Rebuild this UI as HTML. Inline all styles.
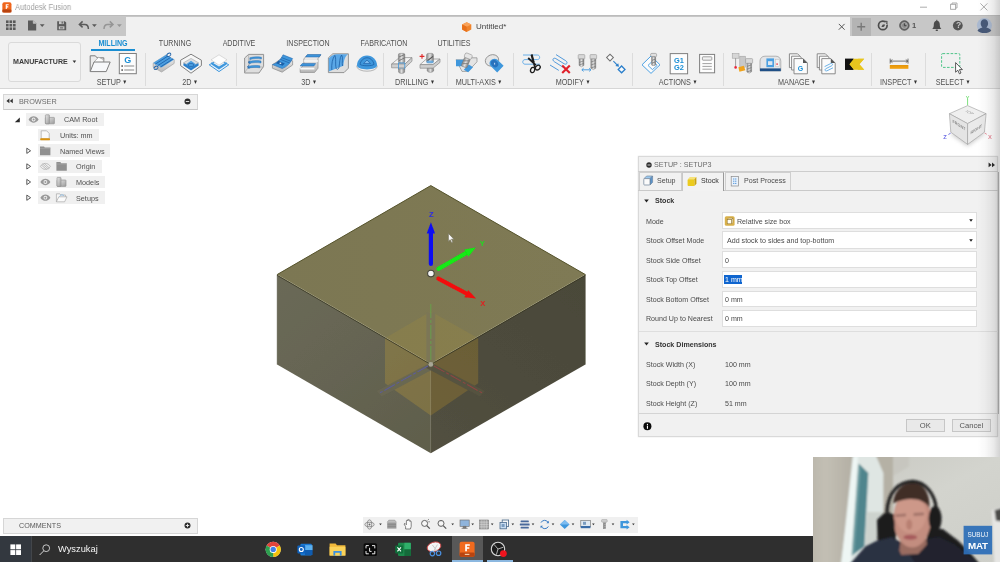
<!DOCTYPE html>
<html lang="en">
<head>
<meta charset="utf-8">
<title>Autodesk Fusion</title>
<style>
*{box-sizing:border-box;margin:0;padding:0}
html,body{width:1000px;height:562px;overflow:hidden;background:#fff}
body{position:relative;font-family:"Liberation Sans",sans-serif;font-size:8px;color:#444;-webkit-font-smoothing:antialiased}
.abs{position:absolute}
.t{position:absolute;white-space:nowrap;line-height:1}
#soft{position:absolute;left:0;top:0;width:1000px;height:562px;filter:blur(.45px)}
/* title */
#title{left:0;top:0;width:1000px;height:15px;background:#fff}
/* quick bar */
#qbar{left:0;top:15px;width:1000px;height:21px;background:#c7c7c7;border-top:1.600px solid #bcbcbc}
#tabarea{left:126px;top:17px;width:724px;height:19px;background:#f1f1f1}
/* ribbon */
#ribbon{left:0;top:36px;width:1000px;height:53.4px;background:#f1f1f1;border-bottom:1px solid #d6d6d6}
.rt{position:absolute;top:39.5px;font-size:7.6px;color:#505050;white-space:nowrap;line-height:8px;transform:translateX(-50%) scaleY(1.24);transform-origin:50% 88%}
.rl{position:absolute;margin-left:.8px;top:78.5px;font-size:7.25px;color:#505050;white-space:nowrap;line-height:8px;transform:translateX(-50%) scaleY(1.2);transform-origin:50% 88%}
.rl i{font-style:normal;font-size:5px;position:relative;top:-1px;margin-left:1.5px;color:#333}
.sep{position:absolute;top:53px;width:1px;height:33px;background:#dcdcdc}
.t,.rt,.rl,.tx,.pl,.pv,.ph,.pbtn,svg{will-change:transform}
.pl,.pv,.ph{transform:scaleY(1.12);transform-origin:0 86%}
.tx{transform:scaleY(1.06);transform-origin:0 86%}
</style>
</head>
<body>
<div id="soft">
<!--TITLE-->
<div id="title" class="abs">
  <svg class="abs" style="left:1.700px;top:1.600px" width="10" height="11" viewBox="0 0 11 11" preserveAspectRatio="none"><rect x="0.4" y="0.2" width="10" height="10.4" rx="2" fill="#f0661c"/><rect x="0.4" y="7.6" width="10" height="3" rx="1.2" fill="#b8430f"/><path d="M4.1 2.2h3.2v1.1H5.3v1h1.6v1.1H5.3v1.7H4.1z" fill="#fff"/></svg>
  <span class="t" style="left:14.6px;top:2.6px;font-size:9px;color:#a0a0a0;transform:scaleX(.838);transform-origin:0 50%">Autodesk Fusion</span>
  <svg class="abs" style="left:915px;top:0" width="80" height="15" viewBox="0 0 80 15" fill="none" stroke="#a4a4a4" stroke-width="0.9"><path d="M5 7.2h7"/><rect x="35.6" y="4.3" width="5" height="5"/><path d="M37 4.3V3h5v5h-1.3"/><path d="M65.4 3.4l7 7M72.4 3.4l-7 7"/></svg>
</div>
<div id="qbar" class="abs"></div>
<div id="tabarea" class="abs"></div>
<div class="abs" style="left:852px;top:18px;width:19px;height:18px;background:#b4b4b4"></div>
<svg class="abs" style="left:0;top:15px" width="1000" height="21" viewBox="0 15 1000 21">
  <!-- grid -->
  <g fill="#5a5a5a">
    <rect x="6" y="20.4" width="2.6" height="2.6"/><rect x="9.5" y="20.4" width="2.6" height="2.6"/><rect x="13" y="20.4" width="2.6" height="2.6"/>
    <rect x="6" y="23.9" width="2.6" height="2.6"/><rect x="9.5" y="23.9" width="2.6" height="2.6"/><rect x="13" y="23.9" width="2.6" height="2.6"/>
    <rect x="6" y="27.4" width="2.6" height="2.6"/><rect x="9.5" y="27.4" width="2.6" height="2.6"/><rect x="13" y="27.4" width="2.6" height="2.6"/>
    <!-- file -->
    <path d="M28 20.4h5.2l3 3v7H28z"/>
    <path d="M39.8 24.2h4.8l-2.4 2.9z"/>
    <!-- save -->
    <path d="M57.2 21.2h7.6l1.4 1.4v7.6h-9z"/>
    <!-- undo -->
    <path d="M92 24.2h4.8l-2.4 2.9z"/>
  </g>
  <rect x="59" y="21.2" width="4.8" height="2.9" fill="#c6c6c6"/><rect x="61.6" y="21.6" width="1.2" height="2" fill="#5a5a5a"/>
  <rect x="58.8" y="26.3" width="5.6" height="3" fill="#c6c6c6"/><rect x="60" y="27.4" width="3.2" height="1" fill="#5a5a5a"/>
  <path d="M33.2 20.4v3h3" fill="#c6c6c6" stroke="#c6c6c6" stroke-width=".5"/>
  <path d="M82.6 21.4l-3.2 3 3.2 3M79.6 24.4h5.2c2.4 0 3.6 1.6 3.6 4.6" fill="none" stroke="#5a5a5a" stroke-width="1.5"/>
  <g opacity=".45"><path d="M109.8 21.4l3.2 3-3.2 3M112.8 24.4h-5.2c-2.4 0-3.6 1.6-3.6 4.6" fill="none" stroke="#5a5a5a" stroke-width="1.5"/><path d="M117 24.2h4.8l-2.4 2.9z" fill="#5a5a5a"/></g>
  <!-- doc tab -->
  <g><path d="M466.7 22.2l4.6 2.2v5.2l-4.6 2.4-4.6-2.4v-5.2z" fill="#f0842c"/><path d="M466.7 22.2l4.6 2.2-4.6 2.3-4.6-2.3z" fill="#f9a35a"/><path d="M466.7 26.7v5.3l-4.6-2.4v-5.2z" fill="#e8701a"/></g>
  <path d="M838.800 23.900l5.800 5.800M844.600 23.900l-5.800 5.800" stroke="#555" stroke-width="1" fill="none"/>
  <path d="M857.2 26.800h8M861.2 22.800v8" stroke="#787878" stroke-width="1.400" fill="none"/>
  <!-- extensions -->
  <circle cx="882.800" cy="25.400" r="4.300" fill="none" stroke="#4c4c4c" stroke-width="1.700"/><path d="M882.800 25.400l3.400-3.800 1.600 3z" fill="#c6c6c6"/><path d="M881.400 26.800c1.800.6 3.400-.4 3.600-2.400l-2.200.2z" fill="#4c4c4c"/><path d="M884.600 21.200l2.600.2-.6 2.600" fill="none" stroke="#4c4c4c" stroke-width="1"/>
  <circle cx="904.400" cy="25.500" r="4.700" fill="#6a6a6a" stroke="#4c4c4c" stroke-width=".9"/><circle cx="904.400" cy="25.500" r="3" fill="#8c8c8c" stroke="#c6c6c6" stroke-width=".6"/><path d="M904.400 23.400v2.300h2" stroke="#3a3a3a" stroke-width=".9" fill="none"/>
  <!-- bell -->
  <path d="M932.200 29c1.400-1 1.600-2.600 1.600-4.400 0-2.200 1.200-3.800 3-3.800s3 1.600 3 3.800c0 1.800.2 3.400 1.600 4.400z" fill="#4c4c4c"/><rect x="935.600" y="29.400" width="2.400" height="1.500" rx=".7" fill="#4c4c4c"/><rect x="936.300" y="19.800" width="1" height="1.400" fill="#4c4c4c"/>
  <!-- help -->
  <circle cx="957.8" cy="25.600" r="4.900" fill="#555"/>
  <!-- avatar -->
  <circle cx="984.400" cy="25.500" r="7.500" fill="#aab9d0"/>
  <path d="M984.400 19.200c2.300 0 3.700 1.800 3.700 4.200 0 1.700-.7 3.200-1.800 4 2.400.4 4.200 1.500 5 3.400-1.600 1.500-4 2.300-6.900 2.300s-5.300-.8-6.900-2.300c.8-1.900 2.600-3 5-3.400-1.100-.8-1.800-2.300-1.800-4 0-2.400 1.400-4.200 3.700-4.200z" fill="#475978"/>
</svg>
<span class="t" style="left:475.600px;top:23.100px;font-size:8px;color:#444">Untitled*</span>
<span class="t" style="left:911.600px;top:22px;font-size:7.600px;color:#555;font-weight:bold">1</span>
<span class="t" style="left:955.500px;top:21.400px;font-size:8.500px;color:#c6c6c6;font-weight:bold">?</span>

<!--QBAR-->
<!--RIBBON-->
<div id="ribbon" class="abs"></div>
<div class="abs" style="left:8px;top:42.400px;width:73px;height:39.600px;border:1px solid #dadada;border-radius:3px;background:#f3f3f3"></div>
<span class="t" style="left:13.3px;top:59.4px;font-size:7.1px;font-weight:bold;color:#3c3c3c">MANUFACTURE</span>
<svg class="abs" style="left:72.4px;top:60.3px" width="5" height="4" viewBox="0 0 5 4"><path d="M.6.6h3.6L2.4 3z" fill="#333"/></svg>
<span class="rt" style="left:112.6px;color:#1a8ed2;font-weight:bold;font-size:7.1px">MILLING</span>
<div class="abs" style="left:90.500px;top:48.900px;width:44.500px;height:1.900px;background:#1a8ed2"></div>
<span class="rt" style="left:175px;font-size:7.1px">TURNING</span>
<span class="rt" style="left:238.5px;font-size:7.1px">ADDITIVE</span>
<span class="rt" style="left:308px;font-size:7.1px">INSPECTION</span>
<span class="rt" style="left:383.5px;font-size:7.1px">FABRICATION</span>
<span class="rt" style="left:453.5px;font-size:7.1px">UTILITIES</span>
<span class="rl" style="left:111.400px">SETUP<i>&#9660;</i></span>
<span class="rl" style="left:189px">2D<i>&#9660;</i></span>
<span class="rl" style="left:308.4px">3D<i>&#9660;</i></span>
<span class="rl" style="left:413.8px">DRILLING<i>&#9660;</i></span>
<span class="rl" style="left:478px">MULTI-AXIS<i>&#9660;</i></span>
<span class="rl" style="left:572.3px">MODIFY<i>&#9660;</i></span>
<span class="rl" style="left:677.4px">ACTIONS<i>&#9660;</i></span>
<span class="rl" style="left:795.8px">MANAGE<i>&#9660;</i></span>
<span class="rl" style="left:898.3px">INSPECT<i>&#9660;</i></span>
<span class="rl" style="left:951.8px">SELECT<i>&#9660;</i></span>
<div class="sep" style="left:144.5px"></div><div class="sep" style="left:235.6px"></div><div class="sep" style="left:383px"></div>
<div class="sep" style="left:446.5px"></div><div class="sep" style="left:513px"></div><div class="sep" style="left:632px"></div>
<div class="sep" style="left:723.2px"></div><div class="sep" style="left:871px"></div><div class="sep" style="left:925.4px"></div>
<svg id="ricons" class="abs" style="left:0;top:50px" width="1000" height="28" viewBox="0 50 1000 28">
<defs>
<linearGradient id="gsl" x1="0" y1="0" x2="0" y2="1"><stop offset="0" stop-color="#f4f4f4"/><stop offset="1" stop-color="#b8b8b8"/></linearGradient>
<linearGradient id="gmt" x1="0" y1="0" x2="1" y2="0"><stop offset="0" stop-color="#8a8a8a"/><stop offset=".5" stop-color="#e2e2e2"/><stop offset="1" stop-color="#7c7c7c"/></linearGradient>
</defs>
<!-- 1 folder -->
<g fill="none" stroke="#7d7d7d" stroke-width="1">
<path d="M90.200 71.400V55.800h5.200l1.600 2h6.800v4" fill="#ececec"/>
<path d="M93.600 62.400l5-5.200 4.800 2.400v3.600" fill="#fdfdfd" stroke="#a4a4a4" stroke-width=".8"/>
<path d="M90.200 71.600l3.800-9.600h16.200l-4 9.600z" fill="#f7f8fa"/>
</g>
<!-- 2 G doc -->
<rect x="119.300" y="53.500" width="17" height="20.200" fill="#fdfdfd" stroke="#7f7f7f" stroke-width="1"/>
<text x="127.800" y="63.400" font-family="Liberation Sans, sans-serif" font-weight="bold" font-size="9" fill="#1b8fd6" text-anchor="middle">G</text>
<path d="M124.200 66h10M124.200 70h10" stroke="#8a8a8a" stroke-width="1.100"/><rect x="121.400" y="65.300" width="1.500" height="1.500" fill="#444"/><rect x="121.400" y="69.300" width="1.500" height="1.500" fill="#444"/>
<!-- 3 2D adaptive -->
<path d="M153.200 63.200l12.600-8 8.400 4.400v3.800l-12.600 8.600-8.400-4.800z" fill="url(#gsl)" stroke="#9a9a9a" stroke-width=".6"/>
<path d="M153.200 63l12.600-8 8.400 4.600-12.600 8z" fill="#4a9ee0"/>
<path d="M155.200 64.200l12.800-8.200M157.800 65.600l12.800-8.200M160.400 67l12.600-8" stroke="#1f62aa" stroke-width=".9" fill="none"/>
<ellipse cx="168.800" cy="54.800" rx="2.200" ry="1.500" fill="none" stroke="#1f62aa" stroke-width=".9" transform="rotate(-30 168.800 54.800)"/><ellipse cx="156" cy="67.800" rx="2.200" ry="1.500" fill="none" stroke="#1f62aa" stroke-width=".9" transform="rotate(-30 156 67.800)"/>
<!-- 4 2D pocket -->
<path d="M191 54.200l10.400 6v5.400l-10.400 7.600-10.400-7.600v-5.400z" fill="#f7f7f7" stroke="#7f7f7f" stroke-width="1"/>
<path d="M191 59.200l7.600 4.200v2l-7.600 5.200-7.600-5.200v-2z" fill="#2b7fcb"/>
<path d="M191 58.400l7.600 4.400-7.600 4-7.600-4z" fill="#d9dde2" stroke="#9a9a9a" stroke-width=".5"/>
<path d="M191 60.800l5.200 3.600-5.200 3.400-5.200-3.400z" fill="#4da0e2"/><ellipse cx="191" cy="65" rx="3" ry="1.500" fill="none" stroke="#1c5fa6" stroke-width=".7"/>
<!-- 5 2D contour -->
<path d="M219 59.400l9.800 5.400-9.800 6.800-9.800-6.800z" fill="#e8f1fa" stroke="#3f97dc" stroke-width="1"/>
<path d="M211.400 62v2.400l7.600 5 7.600-5v-2.400l-7.600 4.600z" fill="#3f97dc"/>
<path d="M219 54.800l8 5-8 5.400-8-5.400z" fill="#fdfdfd" stroke="#c4c4c4" stroke-width=".6"/>
<!-- 6 3D adaptive -->
<path d="M244.600 58l4-3.600h15v12l-4.600 6.600h-14.400z" fill="#dedede" stroke="#8a8a8a" stroke-width=".9"/>
<path d="M248.600 54.400v12.600l-4 5.600M248.600 67h15" fill="none" stroke="#a2a2a2" stroke-width=".6"/>
<path d="M249.800 57.800c3.600-1.200 7.800-1.200 11.600-.6v1.800c-3.800-.6-8-.6-11.600.6zM249 61.600c3.800-1.200 8-1.200 12-.600v2c-4-.6-8.200-.6-12 .6zM248 66.400c3.800-1.200 8-1.200 11.800-.6v2c-3.800-.6-8-.6-11.800.6z" fill="#3f97dc" stroke="#1c5fa6" stroke-width=".4"/>
<path d="M250.400 60.400l-2.400 1.800 2.600 1.200M249.600 64.800l-2.400 2 2.600 1.200" fill="none" stroke="#1c5fa6" stroke-width=".6"/>
<!-- 7 3D pocket -->
<path d="M272.400 64.800l10.800-7.400 9.400 3.400v4.200l-10.400 7.200-9.800-4z" fill="url(#gsl)" stroke="#8a8a8a" stroke-width=".7"/>
<path d="M272.400 64.600c5-1.400 8.600-5.200 10.600-9.800l9.600 3.800c-2.200 4.600-5.600 8.200-10.400 10z" fill="#3f97dc" stroke="#1c5fa6" stroke-width=".5"/>
<path d="M276 63.200l6.600 2.600 2.200-2.400-6.400-2.600z" fill="#1c5fa6"/><path d="M281.600 57.600l9.200 3.600M280.400 59.400l9.200 3.600" stroke="#1c5fa6" stroke-width=".7"/>
<rect x="279.600" y="62.600" width="1.600" height="1.300" fill="#e9f2fb"/>
<!-- 8 steps -->
<path d="M307.200 55h13.600l-2.800 3.600v9.600l-3.400 4.200h-14.400v-3.800l3.600-3.600v-6z" fill="url(#gsl)" stroke="#8a8a8a" stroke-width=".7"/>
<path d="M307.400 54.600h13.600l-1.800 2.400h-13.600zM302.200 63.600h13.400l-1.800 2.400h-13.600z" fill="#3f97dc" stroke="#1c5fa6" stroke-width=".5"/>
<path d="M303.800 61h14.200M300.200 68.600h14.200" stroke="#f8f8f8" stroke-width="1.600"/>
<!-- 9 parallel -->
<path d="M328.400 57.800l4.400-4h15.600v14.400l-4.400 4.400h-15.600z" fill="#dedede" stroke="#8a8a8a" stroke-width=".9"/>
<path d="M328.800 58.400c2.600-3 5.200-4.200 8-4.200h11.400c-3.200 1.800-4.400 6-4.800 11.600l-14.600 5.600z" fill="#5aa7e6"/>
<path d="M331.800 70c-.4-6 .6-11.400 3-14.600 1.600 2.200.2 8.800 1.400 13 1 1.800 2.400.6 2.800-1 .8-4.600.6-10 2.600-12.400 1.800 2 0 8.200 1 11" fill="none" stroke="#1c5fa6" stroke-width=".8"/>
<!-- 10 dome -->
<ellipse cx="367" cy="66.400" rx="10.200" ry="4.800" fill="#f2f2f2" stroke="#9a9a9a" stroke-width=".7"/>
<path d="M357 65.600c0-5.600 4.400-10 10-10s10 4.400 10 10c0 2.200-4.400 3.800-10 3.800s-10-1.600-10-3.800z" fill="#3f97dc"/>
<path d="M360 64.400c.6-3.600 3.600-6.600 7-6.600s6.400 3 7 6.600c-2 1.800-12 1.800-14 0z" fill="none" stroke="#1c5fa6" stroke-width=".8"/>
<path d="M363.600 63.600l3.400-3.600 3.400 3.600z" fill="#7dbcf0" stroke="#1c5fa6" stroke-width=".7"/>
<!-- 11 drill -->
<path d="M391.600 64l7.800-6.400h12.600l-7 6.400z" fill="#f4f4f4" stroke="#8a8a8a" stroke-width=".7"/>
<path d="M391.600 64h13.400l7-6.400v3.600l-7 6.600h-13.400z" fill="#cfcfcf" stroke="#8a8a8a" stroke-width=".7"/>
<rect x="398.400" y="53.400" width="6.400" height="9.600" rx="1.400" fill="url(#gmt)" stroke="#777" stroke-width=".5"/>
<path d="M399 57l5.400-2.400M399 60.600l5.400-2.600" stroke="#6a6a6a" stroke-width=".8"/>
<rect x="398.400" y="63" width="6.400" height="6" fill="none" stroke="#3f97dc" stroke-width=".8"/>
<path d="M398.600 68.800h6v3.400c-1.200 1.600-4.800 1.600-6 0z" fill="url(#gmt)" stroke="#777" stroke-width=".5"/>
<!-- 12 bore -->
<path d="M420 64.600l6.400-5.600h13.600l-7 5.600z" fill="#f4f4f4" stroke="#8a8a8a" stroke-width=".7"/>
<path d="M420 64.600h13l7-5.600v3.400l-7 5.800h-13z" fill="#cfcfcf" stroke="#8a8a8a" stroke-width=".7"/>
<rect x="426.600" y="53.400" width="6.800" height="9.400" rx="1.600" fill="url(#gmt)" stroke="#777" stroke-width=".5"/>
<path d="M427.400 60.800l5.600-4.400" stroke="#555" stroke-width="1.200"/><path d="M426.600 60.600h6.800v2.600h-6.800z" fill="#5aa7e6" opacity=".8"/>
<path d="M427.200 68.400h6.400v2.600c-1.400 1.800-5 1.800-6.400 0z" fill="url(#gmt)" stroke="#777" stroke-width=".5"/>
<path d="M419.600 56.400h4.800M422 54v4.800" stroke="#e02828" stroke-width="1.100"/>
<!-- 13 multi-axis -->
<path d="M456 59.800h9l5-2h7v4l-9 9.600h-6z" fill="#e4e4e4" stroke="#8a8a8a" stroke-width=".7"/>
<path d="M456 59.800h8.600v6.400h-8.600zM468.800 64.400l4.200 2.800-4.800 5-4.400-2.400z" fill="#3f97dc"/>
<g transform="rotate(22 467 61)"><rect x="463.400" y="58" width="6" height="9.600" rx="1" fill="url(#gmt)" stroke="#777" stroke-width=".5"/><rect x="462.600" y="53.600" width="7.600" height="4.800" rx="1.600" fill="#e6e6e6" stroke="#888" stroke-width=".5"/><path d="M464 62l5-2M464 65l5-2" stroke="#777" stroke-width=".7"/></g>
<!-- 14 swarf -->
<ellipse cx="492" cy="60.400" rx="6.800" ry="5.600" fill="#e6e6e6" stroke="#8a8a8a" stroke-width=".8" transform="rotate(-20 492 60.400)"/>
<path d="M490.400 60.800c1.600-2.200 4.600-2.800 6.800-1.400l6.400 6.400-6.400 6.600-6.600-6.400c-1.400-1.400-1.400-3.600-.2-5.200z" fill="#3f97dc"/>
<ellipse cx="494.600" cy="63.600" rx="3.200" ry="4" fill="#2872bd" transform="rotate(-40 494.600 63.600)"/><rect x="494.200" y="62.800" width=".9" height="1.800" fill="#d6e8fa"/>
<!-- 15 scissors -->
<path d="M523 55h14.400c3 0 3 4.600 0 4.600h-12.400c-3 0-3 4.600 0 4.600h15" fill="none" stroke="#5aa7e6" stroke-width=".9"/>
<path d="M531.400 54.800l3.600 12.400M528.200 58l7.600 7.200" stroke="#1e1e1e" stroke-width="1.800"/><path d="M531 54.800l1.600-.6 2 8-1.600.4z" fill="#1e1e1e"/>
<ellipse cx="532.600" cy="70" rx="2" ry="2.700" fill="none" stroke="#1e1e1e" stroke-width="1.300" transform="rotate(20 532.600 70)"/><ellipse cx="537.800" cy="67.600" rx="2" ry="2.700" fill="none" stroke="#1e1e1e" stroke-width="1.300" transform="rotate(50 537.800 67.600)"/>
<!-- 16 delete toolpath -->
<path d="M556 54.600l9.800 6.200c2.400 1.600 1 4.400-1.600 3l-8.400-5.200c-2.600-1.400-4 1.400-1.600 3l8.800 5.600M550 65l8.800 5.400" fill="none" stroke="#3f8fd8" stroke-width=".9"/>
<path d="M562.200 65.400l7.600 7.600M569.800 65.400l-7.600 7.600" stroke="#e0202a" stroke-width="2.100"/>
<!-- 17 tool compare -->
<g><rect x="578.200" y="54.600" width="6.600" height="4.400" rx=".8" fill="#d8d8d8" stroke="#888" stroke-width=".5"/><path d="M579 59h5v6.400l-2.500 1.400-2.500-1.400z" fill="url(#gmt)" stroke="#777" stroke-width=".4"/>
<rect x="590" y="54.600" width="6.600" height="4.400" rx=".8" fill="#d8d8d8" stroke="#888" stroke-width=".5"/><path d="M590.800 59h5v9.200l-2.500 1.400-2.500-1.400z" fill="url(#gmt)" stroke="#777" stroke-width=".4"/><path d="M591 62l4.600-1.600M591 65l4.600-1.600M591 68l4.600-1.600M579.200 62.400l4.600-1.600M579.200 65l4.600-1.600" stroke="#6c6c6c" stroke-width=".6"/>
<path d="M582 69.800h8.800M583.600 68.200l-1.800 1.600 1.800 1.600M589.200 68.200l1.800 1.600-1.800 1.600" fill="none" stroke="#3f97dc" stroke-width=".9"/></g>
<!-- 18 move -->
<rect x="607.600" y="55.200" width="4.800" height="4.800" fill="#fafafa" stroke="#6e6e6e" stroke-width="1" transform="rotate(45 610 57.600)"/>
<rect x="619.200" y="67" width="4.800" height="4.800" fill="#fafafa" stroke="#2b7fcb" stroke-width="1.300" transform="rotate(45 621.600 69.400)"/>
<path d="M613.400 61.200l4.400 4.400" stroke="#2b7fcb" stroke-width="1.100"/><path d="M619 66.800l-3.600-.8 2.800-2.800z" fill="#2b7fcb"/>
<!-- 19 simulate -->
<path d="M651 56l9 8.800-9 8.600-9-8.600z" fill="#fbfbfb" stroke="#4a9fe2" stroke-width="1"/>
<path d="M652.600 61l4.600 4.400-4.800 4.200-4.400-4.200z" fill="none" stroke="#4a9fe2" stroke-width=".9"/>
<rect x="650.600" y="53.400" width="6" height="3.400" rx="1.200" fill="#e0e0e0" stroke="#777" stroke-width=".5"/><rect x="651.600" y="56.800" width="4" height="8.600" rx=".8" fill="url(#gmt)" stroke="#6f6f6f" stroke-width=".5"/><path d="M652 60.400l3.400-1.400M652 63.200l3.400-1.400" stroke="#666" stroke-width=".7"/>
<!-- 20 G1G2 -->
<rect x="670.200" y="53.600" width="17.400" height="20.200" fill="#fdfdfd" stroke="#7f7f7f" stroke-width="1"/>
<text x="679" y="62.800" font-family="Liberation Sans, sans-serif" font-weight="bold" font-size="7.400" fill="#1b8fd6" text-anchor="middle">G1</text>
<text x="679" y="70.400" font-family="Liberation Sans, sans-serif" font-weight="bold" font-size="7.400" fill="#1b8fd6" text-anchor="middle">G2</text>
<!-- 21 setup sheet -->
<rect x="699.600" y="54.400" width="15" height="18.400" fill="#fdfdfd" stroke="#7f7f7f" stroke-width="1"/>
<rect x="702.400" y="56.800" width="9.400" height="3.400" rx=".6" fill="#f2f2f2" stroke="#8a8a8a" stroke-width=".8"/><path d="M702.400 63.600h9.400M702.400 66.400h9.400M702.400 69.200h9.400" stroke="#8a8a8a" stroke-width=".8"/>
<!-- 22 tool library -->
<rect x="732.200" y="53.600" width="6.800" height="4.600" fill="#d6d6d6" stroke="#9a9a9a" stroke-width=".5"/><path d="M735.600 58.200v8" stroke="#8a8a8a" stroke-width=".8"/><circle cx="735.600" cy="67.400" r="1.300" fill="#e8283c"/>
<rect x="739.800" y="56.200" width="5.600" height="11" fill="#c8c8c8" stroke="#9a9a9a" stroke-width=".5"/><path d="M738.400 67.200l5.400-1.400 1.600 4.400-6 1.600z" fill="#f0a31c"/>
<rect x="745.600" y="58.600" width="7" height="4.800" rx=".8" fill="#d9d9d9" stroke="#888" stroke-width=".5"/><path d="M746.800 63.400h4.800v8.400l-2.400 1.400-2.400-1.400z" fill="url(#gmt)" stroke="#777" stroke-width=".4"/><path d="M747 66.400l4.400-1.600M747 69.200l4.400-1.600M747 72l4.400-1.600" stroke="#666" stroke-width=".6"/>
<!-- 23 machine -->
<path d="M760 61.200c0-3 2-5 5-5h10.800c3 0 5 2 5 5v9.600h-20.800z" fill="#e3e5e8" stroke="#9a9a9a" stroke-width=".7"/>
<rect x="760" y="68.400" width="20.800" height="2.800" fill="#1f4f86"/>
<rect x="766.400" y="58.400" width="7.600" height="8.800" fill="#4a9fe2"/><rect x="768" y="61.200" width="4.400" height="3.800" fill="#dce6f0"/>
<rect x="775.200" y="59.600" width="4.200" height="7" fill="#f2f2f2" stroke="#b4b4b4" stroke-width=".4"/><rect x="776.400" y="63.400" width="1.400" height="1.400" fill="#e8283c"/>
<!-- 24 G docs -->
<g fill="#fbfbfb" stroke="#7f7f7f" stroke-width=".9"><path d="M789.400 53.800h8.200l2.800 2.800v11h-11z"/><path d="M791.600 56.200h8.200l2.800 2.800v11h-11z"/><path d="M794 58.600h9l4.400 4.400v10.800h-13.400z"/></g><path d="M803 58.600v4.400h4.400z" fill="#555"/>
<text x="800.600" y="71.200" font-family="Liberation Sans, sans-serif" font-weight="bold" font-size="7" fill="#1b8fd6" text-anchor="middle">G</text>
<!-- 25 S docs -->
<g fill="#fbfbfb" stroke="#7f7f7f" stroke-width=".9"><path d="M817.200 53.800h8.200l2.800 2.800v11h-11z"/><path d="M819.400 56.200h8.200l2.800 2.800v11h-11z"/><path d="M821.800 58.600h9l4.400 4.400v10.800h-13.400z"/></g><path d="M830.800 58.600v4.400h4.400z" fill="#555"/>
<path d="M824.600 66.600l6-3c1.800-.8 2.800 1.200 1 2.200l-5.600 2.800c-1.800 1-.8 3 1 2.200l6-3" fill="none" stroke="#4a9fe2" stroke-width=".8"/>
<!-- 26 K -->
<rect x="845" y="58.800" width="8.600" height="11" fill="#111"/><path d="M853.600 58.800h10.600l-4.800 5.500 4.800 5.500h-10.600l-4.400-5.500z" fill="#e8c51e"/><path d="M858.200 58.800h6l-4.800 5.500 4.800 5.500h-6l-4.600-5.500z" fill="#e8c51e"/><path d="M853.600 58.800l-4.600 5.500 4.600 5.500h-8.600v-11z" fill="#111"/>
<!-- 27 measure -->
<rect x="889.800" y="65" width="18.600" height="3.800" fill="#f0a010"/><path d="M891 65v1.400M893 65v1.400M895 65v1.400M897 65v1.400M899 65v1.400M901 65v1.400M903 65v1.400M905 65v1.400M907 65v1.400" stroke="#c77a00" stroke-width=".5"/>
<path d="M890.200 58.600v5M908 58.600v5M890.200 61.100h17.800M892.400 59.600l-2 1.500 2 1.500M905.800 59.600l2 1.500-2 1.500" fill="none" stroke="#555" stroke-width=".8"/>
<!-- 28 select -->
<rect x="941.600" y="53.600" width="18.200" height="13.800" rx="1" fill="none" stroke="#4fc489" stroke-width="1" stroke-dasharray="2.600 1.400"/>
<path d="M955.600 62.600v9.600l2.200-2 1.600 3.600 1.600-.8-1.600-3.400h3z" fill="#fff" stroke="#333" stroke-width=".8"/>

</svg>

<!--BROWSER-->
<style>
.bh{position:absolute;left:3px;width:194.5px;height:16.2px;background:#f1f1f1;border:1px solid #d6d6d6;border-bottom-color:#c8c8c8}
.row{position:absolute;height:12.6px;background:#f0f0f0}
.tx{position:absolute;white-space:nowrap;font-size:7.25px;line-height:8px;color:#505050}
</style>
<div class="bh" style="top:93.6px"></div>
<svg class="abs" style="left:6px;top:98.4px" width="8" height="6" viewBox="0 0 8 6"><path d="M3.400.6v4.600L.4 2.900zM6.800.6v4.600l-3-2.300z" fill="#333"/></svg>
<span class="tx" style="left:19px;top:97.800px;font-size:7.300px;color:#6c6c6c">BROWSER</span>
<svg class="abs" style="left:183.500px;top:98px" width="7" height="7" viewBox="0 0 7 7"><circle cx="3.500" cy="3.500" r="3" fill="#2e2e2e"/><rect x="1.800" y="3.100" width="3.400" height=".9" fill="#f1f1f1"/></svg>
<div class="row" style="left:26.200px;top:113.100px;width:77.600px"></div>
<div class="row" style="left:38.100px;top:128.800px;width:61px"></div>
<div class="row" style="left:38.100px;top:144.400px;width:71.600px"></div>
<div class="row" style="left:38.100px;top:160.100px;width:64.400px"></div>
<div class="row" style="left:38.100px;top:175.700px;width:67px"></div>
<div class="row" style="left:38.100px;top:191.400px;width:67px"></div>
<span class="tx" style="left:64px;top:116.300px">CAM Root</span>
<span class="tx" style="left:59.700px;top:132.200px">Units: mm</span>
<span class="tx" style="left:59.700px;top:147.800px">Named Views</span>
<span class="tx" style="left:76px;top:163.300px">Origin</span>
<span class="tx" style="left:76px;top:178.900px">Models</span>
<span class="tx" style="left:76px;top:194.600px">Setups</span>
<svg class="abs" style="left:0;top:110px" width="120" height="98" viewBox="0 110 120 98">
<defs><linearGradient id="gb1" x1="0" y1="0" x2="1" y2="1"><stop offset="0" stop-color="#e8e8e8"/><stop offset="1" stop-color="#9c9c9c"/></linearGradient></defs>
<path d="M19.800 117.400v4.800h-5z" fill="#2a2a2a"/>
<g fill="none" stroke="#333" stroke-width=".8"><path d="M26.800 148.200l3.800 2.600-3.800 2.600z"/><path d="M26.800 163.800l3.800 2.600-3.800 2.600z"/><path d="M26.800 179.400l3.800 2.600-3.800 2.600z"/><path d="M26.800 195.100l3.800 2.600-3.800 2.600z"/></g>
<!-- eyes -->
<g id="eye1"><path d="M28.600 119.500c2.600-4.200 7.400-4.200 10 0-2.600 4.200-7.400 4.200-10 0z" fill="#999"/><circle cx="33.600" cy="119.500" r="1.900" fill="#f0f0f0"/><circle cx="33.600" cy="119.500" r="1" fill="#999"/></g>
<g><path d="M40.400 182c2.600-4.200 7.400-4.200 10 0-2.600 4.200-7.400 4.200-10 0z" fill="#999"/><circle cx="45.400" cy="182" r="1.900" fill="#f0f0f0"/><circle cx="45.400" cy="182" r="1" fill="#999"/></g>
<g><path d="M40.400 197.700c2.600-4.200 7.400-4.200 10 0-2.600 4.200-7.400 4.200-10 0z" fill="#999"/><circle cx="45.400" cy="197.700" r="1.900" fill="#f0f0f0"/><circle cx="45.400" cy="197.700" r="1" fill="#999"/></g>
<g fill="none" stroke="#b4b4b4" stroke-width=".8"><path d="M40.400 166.400c2.600-4 7.400-4 10 0-2.600 4-7.400 4-10 0z"/><path d="M42.400 163.800l6 5.200M44.200 163.400l5.400 4.800M41.400 165l5.400 4.600"/></g>
<!-- component icons -->
<g><rect x="45.400" y="117.400" width="9" height="6.400" rx=".6" fill="url(#gb1)" stroke="#8a8a8a" stroke-width=".6"/><rect x="45.400" y="114.800" width="4" height="9" rx=".6" fill="url(#gb1)" stroke="#8a8a8a" stroke-width=".6"/></g>
<g><rect x="57" y="180" width="9" height="6.400" rx=".6" fill="url(#gb1)" stroke="#8a8a8a" stroke-width=".6"/><rect x="57" y="177.400" width="4" height="9" rx=".6" fill="url(#gb1)" stroke="#8a8a8a" stroke-width=".6"/></g>
<!-- units doc -->
<path d="M41.200 130.800h5.400l2.600 2.600v5.400h-8z" fill="#fafafa" stroke="#a6a6a6" stroke-width=".7"/><rect x="40.200" y="138.200" width="9.800" height="2" rx=".6" fill="#d99210"/>
<!-- folders -->
<path d="M40 146.400h4l.8 1.200h5.600v7.600H40z" fill="#909090"/><path d="M40 148.400h10.400" stroke="#b0b0b0" stroke-width=".5"/>
<path d="M56.400 162h4l.8 1.200h5.600v7.600h-10.400z" fill="#909090"/><path d="M56.400 164h10.400" stroke="#b0b0b0" stroke-width=".5"/>
<path d="M56.400 201.800v-8h3.400l1 1.200h4.600v2" fill="#f6f6f6" stroke="#9a9a9a" stroke-width=".6"/><path d="M56.400 201.800l2.400-5h8.200l-2.400 5z" fill="#fbfbfb" stroke="#9a9a9a" stroke-width=".6"/><path d="M59.400 196.400l2.400-1.800 2.200 1" fill="none" stroke="#6aaee8" stroke-width=".6"/>
</svg>
<div class="bh" style="top:517.600px;height:16.200px;border-color:#d6d6d6"></div>
<span class="tx" style="left:19.200px;top:522px;font-size:7.2px;color:#5a5a5a">COMMENTS</span>
<svg class="abs" style="left:183.500px;top:522px" width="7" height="7" viewBox="0 0 7 7"><circle cx="3.500" cy="3.500" r="3" fill="#2e2e2e"/><path d="M1.800 3.500h3.400M3.500 1.800v3.400" stroke="#f1f1f1" stroke-width=".9"/></svg>

<!--CANVAS-->
<svg class="abs" style="left:260px;top:175px" width="345" height="290" viewBox="260 175 345 290">
<defs>
<linearGradient id="fl" x1="277" y1="275" x2="431" y2="453" gradientUnits="userSpaceOnUse"><stop offset="0" stop-color="#6a6957"/><stop offset=".5" stop-color="#656452"/><stop offset="1" stop-color="#5f5e4b"/></linearGradient>
<linearGradient id="fr" x1="431" y1="453" x2="585" y2="275" gradientUnits="userSpaceOnUse"><stop offset="0" stop-color="#525040"/><stop offset=".5" stop-color="#4d4b3c"/><stop offset="1" stop-color="#4a4839"/></linearGradient>
<linearGradient id="ft" x1="277" y1="275" x2="585" y2="275" gradientUnits="userSpaceOnUse"><stop offset="0" stop-color="#7c7752"/><stop offset="1" stop-color="#7f7a54"/></linearGradient>
<filter id="bl1" x="-5%" y="-5%" width="110%" height="110%"><feGaussianBlur stdDeviation=".6"/></filter>
</defs>
<g filter="url(#bl1)">
<path d="M277.100 274.600L430.800 363.800V453.200L277.100 364.500z" fill="url(#fl)"/>
<path d="M585.400 274.600L430.800 363.800V453.200L585.400 364.500z" fill="url(#fr)"/>
<path d="M430.800 185.600L585.400 274.600 430.800 363.800 277.100 274.600z" fill="url(#ft)"/>
<!-- inner model -->
<path d="M430.800 311.600L478.200 338.200 430.800 363.800 385 338.200z" fill="#c8a030" opacity=".13"/>
<path d="M385 338.200L430.800 363.800V415.600L385 383.200z" fill="#c09a34" opacity=".3"/>
<path d="M478.200 338.200L430.800 363.800V415.600L478.200 383.200z" fill="#b48a2c" opacity=".3"/>
<!-- axis bands -->
<path d="M426.400 312.500h8.800v51h-8.800z" fill="#7a7656" opacity=".95"/>
<path d="M430.800 362.600l5 5.200-54 28.600-5-5.400z" fill="#686652" opacity=".95"/>
<path d="M430.800 362.600l-5 5.200 54 28.600 5-5.400z" fill="#55523f" opacity=".95"/>
<path d="M430.800 304v58" stroke="#5fae48" stroke-width="1.100" stroke-dasharray="14 2 3 2" opacity=".65"/>
<path d="M428 366l-49 27.400" stroke="#5c5ca0" stroke-width="1.100" stroke-dasharray="12 2 3 2" opacity=".9"/>
<path d="M434 366l49 27.400" stroke="#944444" stroke-width="1.100" stroke-dasharray="12 2 3 2" opacity=".9"/>
<path d="M277.100 275.300L430.800 364.500 585.400 275.300" fill="none" stroke="#36341f" stroke-width="1" opacity=".75"/>
<path d="M277.100 274.300L430.800 363.500 585.400 274.300" fill="none" stroke="#a8a478" stroke-width=".5" opacity=".4"/>
<path d="M277.100 274.600L430.800 185.600 585.400 274.600" fill="none" stroke="#55532c" stroke-width="1"/>
<path d="M277.100 274.600V364.500M585.400 274.600V364.500" stroke="#4a4836" stroke-width=".6" opacity=".6"/>
<path d="M430.800 366V453" stroke="#77745f" stroke-width=".6" opacity=".3"/>
<circle cx="430.800" cy="364.400" r="2.400" fill="#a9a796"/>
</g>
<!-- triad -->
<g filter="url(#bl1)">
<path d="M438.400 278.600l28 14.900" stroke="#f20e0e" stroke-width="4.200" stroke-linecap="round"/><path d="M476 298.600l-11.600-1.400 3.800-7.200z" fill="#f20e0e"/>
<path d="M438.400 268.800l28-15.900" stroke="#12ea12" stroke-width="4.200" stroke-linecap="round"/><path d="M475.800 247.600l-7.400 9.200-4.200-7.200z" fill="#12ea12"/>
<path d="M430.900 264v-31" stroke="#1010f2" stroke-width="4.200" stroke-linecap="round"/><path d="M430.900 222.200l4.200 11.400h-8.400z" fill="#1010f2"/>
<circle cx="430.900" cy="273.600" r="3.300" fill="#f4f4f4" stroke="#45453a" stroke-width="1.100"/>
</g>
<text x="431.200" y="217" font-family="Liberation Sans, sans-serif" font-size="7.600" font-weight="bold" fill="#2a2ae6" text-anchor="middle">Z</text>
<text x="482.400" y="246.400" font-family="Liberation Sans, sans-serif" font-size="7.600" font-weight="bold" fill="#22d822" text-anchor="middle">Y</text>
<text x="482.900" y="305.600" font-family="Liberation Sans, sans-serif" font-size="7.600" font-weight="bold" fill="#e02020" text-anchor="middle">X</text>
<path d="M448.400 233.400v8l1.800-1.700 1.400 3 1.300-.6-1.400-2.900h2.500z" fill="#fafafa" stroke="#77745e" stroke-width=".7"/>
</svg>
<!--CANVAS_END-->
<!--PANEL-->
<style>
#panel{position:absolute;left:637.5px;top:156.400px;width:360.500px;height:280.600px;background:#f1f1f1;border:1px solid #d9d9d9;box-shadow:0 0 1.500px rgba(0,0,0,.12)}
.pl{position:absolute;left:646px;white-space:nowrap;font-size:7.100px;line-height:8px;color:#4a4a4a}
.pv{position:absolute;left:724.500px;white-space:nowrap;font-size:7.100px;line-height:8px;color:#4a4a4a}
.pin{position:absolute;left:721.800px;width:255px;background:#fff;border:1px solid #dedede}
.ph{position:absolute;left:654.500px;white-space:nowrap;font-size:7.100px;line-height:8px;color:#333;font-weight:bold}
.ptab{position:absolute;top:172.400px;height:17.600px;border:1px solid #cfcfcf;border-bottom:none;background:#f1f1f1}
.pbtn{position:absolute;top:419.400px;height:12.600px;width:38.600px;background:#e9e9e9;border:1px solid #c6c6c6;font-size:7.600px;line-height:11.800px;text-align:center;color:#555}
</style>
<div id="panel"></div>
<div class="abs" style="left:638px;top:171px;width:359.500px;height:1.200px;background:#cdcdcd"></div>
<div class="abs" style="left:638px;top:189.600px;width:359.500px;height:1.200px;background:#c9c9c9"></div>
<div class="ptab" style="left:638.500px;width:43.600px"></div>
<div class="ptab" style="left:682.300px;width:42px;height:18.800px;background:#f2f2f2;border-color:#c8c8c8;border-right:1.400px solid #9a9a9a"></div>
<div class="ptab" style="left:725px;width:66.400px"></div>
<svg class="abs" style="left:645.700px;top:161.600px" width="6" height="6" viewBox="0 0 6 6"><circle cx="3" cy="3" r="2.700" fill="#2e2e2e"/><rect x="1.500" y="2.600" width="3" height=".8" fill="#f1f1f1"/></svg>
<span class="pl" style="left:654px;top:160.600px;font-size:7.150px;color:#6a6a6a">SETUP : SETUP3</span>
<svg class="abs" style="left:988px;top:161.800px" width="8" height="6" viewBox="0 0 8 6"><path d="M.6.600v4.600l3-2.300zM4 .600v4.600l3-2.300z" fill="#222"/></svg>
<svg class="abs" style="left:640px;top:173px" width="110" height="18" viewBox="640 173 110 18">
<path d="M644 178.600l2.600-2.600h6l-2.600 2.600z" fill="#9cc8ee" stroke="#6a7f96" stroke-width=".6"/><path d="M650 178.600l2.600-2.600v6.400l-2.600 2.600z" fill="#5a94cc" stroke="#6a7f96" stroke-width=".6"/><rect x="643.800" y="178.600" width="6.200" height="6.400" rx=".8" fill="#fbfbfb" stroke="#6a7f96" stroke-width=".7"/>
<path d="M687.800 179.200l2-2.200h6.600l-2 2.200z" fill="#f6e27a"/><path d="M694.400 179.200l2-2.200v6.800l-2 2.200z" fill="#c9a20e"/><rect x="687.600" y="179.200" width="6.800" height="6.800" rx=".8" fill="#eccb1e"/>
<rect x="731.200" y="176.400" width="7.200" height="9.600" fill="#eaf2fb" stroke="#8a8a8a" stroke-width=".7"/><path d="M733 179h3.600M733 181.200h3.600M733 183.400h3.600" stroke="#4a90d8" stroke-width=".9" stroke-dasharray="1.400 .6"/>
</svg>
<span class="pl" style="left:656.600px;top:177.400px">Setup</span>
<span class="pl" style="left:700.600px;top:177.400px;color:#333">Stock</span>
<span class="pl" style="left:743.600px;top:177.400px">Post Process</span>
<svg class="abs" style="left:644.300px;top:199.400px" width="5" height="4" viewBox="0 0 5 4"><path d="M.2.400h4.600L2.500 3.600z" fill="#222"/></svg>
<span class="ph" style="top:197.400px">Stock</span>
<div class="pin" style="top:211.900px;height:17.500px"></div>
<div class="pin" style="top:231.100px;height:17.500px"></div>
<div class="pin" style="top:251.400px;height:17.100px"></div>
<div class="pin" style="top:271.300px;height:16.400px"></div>
<div class="pin" style="top:290.800px;height:16.400px"></div>
<div class="pin" style="top:310.400px;height:16.200px"></div>
<div class="abs" style="left:724.200px;top:275.300px;width:18px;height:8.400px;background:#0f65cf"></div>
<span class="pl" style="top:217.800px">Mode</span>
<span class="pl" style="top:237px">Stock Offset Mode</span>
<span class="pl" style="top:256.700px">Stock Side Offset</span>
<span class="pl" style="top:275.900px">Stock Top Offset</span>
<span class="pl" style="top:295.700px">Stock Bottom Offset</span>
<span class="pl" style="top:314.500px">Round Up to Nearest</span>
<svg class="abs" style="left:724px;top:215px" width="12" height="12" viewBox="0 0 12 12"><rect x=".8" y="1.200" width="9.800" height="9.600" rx="1.600" fill="#d8b04a"/><path d="M3.200 4.600l1.400-1.400h4.200l-1.400 1.400zM7.400 4.600l1.400-1.400v4.200L7.400 8.800z" fill="#f7f1dc" stroke="#8a6e28" stroke-width=".4"/><rect x="3.200" y="4.600" width="4.200" height="4.200" fill="#fffdf4" stroke="#8a6e28" stroke-width=".5"/></svg>
<span class="pv" style="left:737.300px;top:217.800px">Relative size box</span>
<span class="pv" style="left:727px;top:237px">Add stock to sides and top-bottom</span>
<span class="pv" style="top:256.700px">0</span>
<span class="pv" style="top:275.900px;color:#fff">1 mm</span>
<span class="pv" style="top:295.700px">0 mm</span>
<span class="pv" style="top:314.500px">0 mm</span>
<svg class="abs" style="left:968.800px;top:219.200px" width="4" height="3" viewBox="0 0 4 3"><path d="M.2.200h3.600L2 2.800z" fill="#222"/></svg>
<svg class="abs" style="left:968.800px;top:238.600px" width="4" height="3" viewBox="0 0 4 3"><path d="M.2.200h3.600L2 2.800z" fill="#222"/></svg>
<div class="abs" style="left:638.500px;top:331px;width:359px;height:1px;background:#dedede"></div>
<svg class="abs" style="left:644.300px;top:342.400px" width="5" height="4" viewBox="0 0 5 4"><path d="M.2.400h4.600L2.500 3.600z" fill="#222"/></svg>
<span class="ph" style="top:340.500px">Stock Dimensions</span>
<span class="pl" style="top:361px">Stock Width (X)</span><span class="pv" style="top:361px">100 mm</span>
<span class="pl" style="top:379.600px">Stock Depth (Y)</span><span class="pv" style="top:379.600px">100 mm</span>
<span class="pl" style="top:400.200px">Stock Height (Z)</span><span class="pv" style="top:400.200px">51 mm</span>
<div class="abs" style="left:638.500px;top:413.200px;width:359px;height:1px;background:#d4d4d4"></div>
<svg class="abs" style="left:643px;top:421.800px" width="9" height="9" viewBox="0 0 9 9"><circle cx="4.400" cy="4.300" r="4" fill="#0c0c0c"/><rect x="3.900" y="3.600" width="1.100" height="3.200" fill="#fff"/><rect x="3.900" y="1.900" width="1.100" height="1.100" fill="#fff"/></svg>
<div class="abs" style="left:997.800px;top:172px;width:1px;height:241.500px;background:rgba(60,60,60,.38)"></div>
<div class="pbtn" style="left:906.100px">OK</div>
<div class="pbtn" style="left:952px">Cancel</div>

<!--BOTTOM-->
<!-- viewcube -->
<svg class="abs" style="left:930px;top:90px" width="70" height="65" viewBox="930 90 70 65">
<defs><filter id="vb" x="-20%" y="-20%" width="140%" height="140%"><feGaussianBlur stdDeviation="2.200"/></filter>
<filter id="vb2"><feGaussianBlur stdDeviation=".450"/></filter></defs>
<path d="M951 134l16.600 12 17-12.600-4-4-26 .6z" fill="#9a9a9a" opacity=".55" filter="url(#vb)"/>
<g filter="url(#vb2)">
<path d="M967.600 98.500v7" stroke="#7ee07e" stroke-width="1"/>
<path d="M950.600 133.200l-2.200 1.300" stroke="#6464e0" stroke-width=".9"/><path d="M984.600 133l2.200 1.300" stroke="#e88a98" stroke-width=".9"/>
<path d="M967.600 105.600l18.500 8.100-18.500 9.900-18.200-9.900z" fill="#efefef" stroke="#9c9c9c" stroke-width=".6"/>
<path d="M949.400 113.700l18.200 9.900v20.800l-16.800-12.200z" fill="#e4e4e4" stroke="#9c9c9c" stroke-width=".6"/>
<path d="M986.100 113.700l-18.500 9.900v20.800l16.800-12.200z" fill="#eaeaea" stroke="#9c9c9c" stroke-width=".6"/>
</g>
<text transform="matrix(.82 .36 -.82 .42 964.200 111.600)" font-family="Liberation Sans, sans-serif" font-size="4.600" fill="#8a8a8a">TOP</text>
<text transform="matrix(.86 .56 0 1 952.600 122.400)" font-family="Liberation Sans, sans-serif" font-size="4.300" fill="#8a8a8a" font-weight="bold">FRONT</text>
<text transform="matrix(.86 -.54 0 1 970.600 134.400)" font-family="Liberation Sans, sans-serif" font-size="4.300" fill="#8a8a8a" font-weight="bold">RIGHT</text>
<text x="967.600" y="99.600" font-family="Liberation Sans, sans-serif" font-size="5.400" fill="#7ee07e" text-anchor="middle" font-weight="bold">Y</text>
<text x="945" y="139.200" font-family="Liberation Sans, sans-serif" font-size="5.800" fill="#6c6ce4" text-anchor="middle" font-weight="bold">Z</text>
<text x="990" y="139.200" font-family="Liberation Sans, sans-serif" font-size="5.800" fill="#e88a98" text-anchor="middle" font-weight="bold">X</text>
</svg>
<!-- nav bar -->
<div class="abs" style="left:363px;top:517.200px;width:275px;height:16px;background:#f0f0f0"></div>
<svg class="abs" style="left:363px;top:517px" width="275" height="16" viewBox="363 517 275 16">
<g fill="#333"><path d="M379.200 523.600h2.600l-1.300 1.700z"/><path d="M451.400 523.600h2.600l-1.300 1.700z"/><path d="M471.400 523.600h2.600l-1.300 1.700z"/><path d="M490.900 523.600h2.600l-1.300 1.700z"/><path d="M511.500 523.600h2.600l-1.300 1.700z"/><path d="M531.700 523.600h2.600l-1.300 1.700z"/><path d="M551.700 523.600h2.600l-1.300 1.700z"/><path d="M571.700 523.600h2.600l-1.300 1.700z"/><path d="M592.100 523.600h2.600l-1.300 1.700z"/><path d="M611.700 523.600h2.600l-1.300 1.700z"/><path d="M632.100 523.600h2.600l-1.300 1.700z"/></g>
<!-- orbit -->
<g fill="none" stroke="#7a7a7a" stroke-width=".8"><ellipse cx="369.500" cy="524.500" rx="4.600" ry="2.200"/><ellipse cx="369.500" cy="524.500" rx="2.200" ry="4.600"/></g><circle cx="369.500" cy="524.500" r="1" fill="#666"/>
<!-- look at -->
<rect x="387.200" y="522.200" width="9.200" height="6.400" fill="#9a9a9a"/><path d="M387.200 522.200l1.600-2h6l1.600 2" fill="#bdbdbd" stroke="#7a7a7a" stroke-width=".5"/><path d="M387.600 524.400h8.400M387.600 526.400h8.400" stroke="#7a7a7a" stroke-width=".5"/>
<!-- pan -->
<path d="M405.600 529v-2.400l-1.600-2.600 1-.6 1.400 1.400v-4c0-.8 1.200-.8 1.200 0v-.8c0-.8 1.200-.8 1.200 0v.6c0-.8 1.200-.8 1.200 0v1c0-.8 1.200-.8 1.200 0v5l-.8 2.400z" fill="#fafafa" stroke="#555" stroke-width=".7"/>
<!-- zoom -->
<circle cx="424.600" cy="523.400" r="3" fill="#f6f6f6" stroke="#555" stroke-width=".9"/><path d="M426.800 525.600l3 3" stroke="#555" stroke-width="1.300"/><path d="M427.600 520.400l1.400-1.400M428.200 521.800h1.800" stroke="#555" stroke-width=".6"/>
<circle cx="441" cy="523.400" r="3" fill="#f6f6f6" stroke="#555" stroke-width=".9"/><path d="M443.200 525.600l3 3" stroke="#555" stroke-width="1.300"/><rect x="438.600" y="521.400" width="5" height="4" fill="none" stroke="#8a8a8a" stroke-width=".4" stroke-dasharray=".8 .6"/>
<!-- display -->
<rect x="460" y="520" width="9.200" height="6.400" fill="#8fb4dc" stroke="#6a6a6a" stroke-width=".6"/><path d="M463.200 526.400h2.800v1.600h-2.800zM461.600 528.400h6" stroke="#6a6a6a" stroke-width=".7" fill="#888"/>
<!-- grid -->
<rect x="479.600" y="520" width="9" height="9" fill="#a8a8a8" stroke="#6a6a6a" stroke-width=".5"/><path d="M481.800 520v9M484.100 520v9M486.400 520v9M479.600 522.200h9M479.600 524.500h9M479.600 526.800h9" stroke="#e4e4e4" stroke-width=".4"/>
<!-- viewports -->
<rect x="502.200" y="520" width="6.400" height="6.400" fill="#f6f6f6" stroke="#4a6a8c" stroke-width=".8"/><rect x="500" y="522.400" width="6.400" height="6.400" fill="#c9dcf0" stroke="#4a6a8c" stroke-width=".8"/><rect x="501.600" y="524" width="3" height="3" fill="#7a9cc0"/>
<!-- layers -->
<g fill="#4a6a9c"><rect x="520.600" y="520.400" width="8.200" height="1.800" rx=".5"/><rect x="519.800" y="523.400" width="9.800" height="2.200" rx=".5"/><rect x="520.600" y="526.800" width="8.200" height="1.800" rx=".5"/></g>
<!-- rotate -->
<path d="M541 522.600a4 4 0 0 1 7.200 0M548.400 526.400a4 4 0 0 1-7.200 0" fill="none" stroke="#3a7cc4" stroke-width="1"/><path d="M548.800 520.800v2.400h-2.400zM540.600 528.200v-2.400h2.400z" fill="#3a7cc4"/>
<!-- diamond -->
<path d="M564.700 520l4.800 4.500-4.800 4.500-4.800-4.500z" fill="#3f97dc"/><path d="M564.700 520l4.800 4.500h-9.600z" fill="#7dbcf0"/>
<!-- camera -->
<rect x="580.800" y="520.400" width="9.600" height="6.600" fill="#dfe8f2" stroke="#6a6a6a" stroke-width=".6"/><rect x="580.800" y="526" width="9.600" height="2.200" fill="#3a6ca8"/><rect x="583" y="521.800" width="3" height="3" fill="#7a9cc0"/>
<!-- tool -->
<rect x="601.600" y="519.600" width="5.600" height="2.600" rx=".6" fill="#cfcfcf" stroke="#8a8a8a" stroke-width=".4"/><rect x="603" y="522.200" width="2.800" height="6.800" fill="#a4a4a4"/><path d="M603 524.200l2.800-1M603 526.200l2.800-1M603 528.200l2.800-1" stroke="#6e6e6e" stroke-width=".5"/>
<!-- arrow -->
<path d="M620.400 521h6.200v-1.200l3 2.400-3 2.200v-1.200h-3.600v2.800h3.600v-1l3 2.200-3 2.400v-1.400h-6.200z" fill="#3f97dc"/>
</svg>

<!--TASKBAR-->
<div class="abs" style="left:0;top:536.400px;width:814px;height:26px;background:#2f2f2f"></div>
<div class="abs" style="left:0;top:536.400px;width:31px;height:26px;background:#33383f"></div>
<div class="abs" style="left:30.800px;top:536.400px;width:1px;height:26px;background:#43464a"></div>
<div class="abs" style="left:451.600px;top:536.400px;width:31.400px;height:26px;background:#585858"></div>
<div class="abs" style="left:451.600px;top:560.400px;width:31.400px;height:1.600px;background:#8cb8e0"></div>
<div class="abs" style="left:486.600px;top:560.400px;width:26.600px;height:1.600px;background:#8cb8e0"></div>
<svg class="abs" style="left:0;top:537px" width="530" height="25" viewBox="0 537 530 25">
<g fill="#fff"><rect x="10.400" y="544.400" width="4.900" height="4.900"/><rect x="16.100" y="544.400" width="4.900" height="4.900"/><rect x="10.400" y="550.100" width="4.900" height="4.900"/><rect x="16.100" y="550.100" width="4.900" height="4.900"/></g>
<circle cx="46.200" cy="548.200" r="3.400" fill="none" stroke="#d8d8d8" stroke-width=".9"/><path d="M43.800 550.800l-4.200 4.200" stroke="#d8d8d8" stroke-width="1"/>
<!-- chrome -->
<circle cx="273.200" cy="549.400" r="7.600" fill="#e8e8e8"/>
<path d="M273.200 549.400L266.600 545.600A7.600 7.600 0 0 1 279.800 545.600z" fill="#e2443a"/>
<path d="M273.200 549.400L279.800 545.600A7.600 7.600 0 0 1 273.200 557z" fill="#f4c20e"/>
<path d="M273.200 549.400L273.200 557A7.600 7.600 0 0 1 266.600 545.600z" fill="#2ea050"/>
<circle cx="273.200" cy="549.400" r="3.500" fill="#fff"/><circle cx="273.200" cy="549.400" r="2.700" fill="#3f80e8"/>
<!-- outlook -->
<rect x="300.400" y="543.800" width="11.400" height="11.600" rx="1" fill="#1a78d2"/><rect x="305" y="545.200" width="7.600" height="5" fill="#5ab0f0"/><rect x="305" y="550" width="7.600" height="5" fill="#0f5cb0"/><rect x="297.400" y="545.600" width="7.800" height="7.800" rx="1" fill="#0e62be"/><circle cx="301.300" cy="549.500" r="2" fill="none" stroke="#fff" stroke-width="1.100"/>
<!-- explorer -->
<path d="M329.600 543.600h6l1.400 1.600h8.400v10.400h-15.800z" fill="#f0b83a"/><rect x="329.600" y="546.800" width="15.800" height="8.800" fill="#fad25a"/><rect x="333.400" y="551" width="8.200" height="4.600" fill="#3a90e0"/><rect x="335.200" y="552.800" width="4.600" height="2.800" fill="#fad25a"/>
<!-- snip -->
<rect x="363.600" y="543.200" width="13.400" height="12.800" rx="1.600" fill="#0a0a0a"/><path d="M366 548.400v-2.800h2.800M372 545.600h2.800v2.800M374.800 551v2.800H372M368.800 553.800H366V551" fill="none" stroke="#fff" stroke-width=".9"/><path d="M369.600 547.800v3.600h2" fill="none" stroke="#fff" stroke-width=".9"/>
<!-- excel -->
<rect x="398" y="542.800" width="12.800" height="13.200" rx="1" fill="#1d8a4c"/><rect x="404.400" y="542.800" width="6.400" height="6.600" fill="#2fb06a"/><rect x="404.400" y="549.400" width="6.400" height="6.600" fill="#156a3a"/><rect x="395.200" y="545.400" width="8" height="8" rx="1" fill="#0f6e3a"/><path d="M397.400 547.400l3.600 4M401 547.400l-3.600 4" stroke="#fff" stroke-width="1.100"/>
<!-- snipping -->
<ellipse cx="434" cy="546.800" rx="7" ry="4.600" fill="#f4f4f4" stroke="#d04848" stroke-width=".9" transform="rotate(-18 434 546.800)"/><circle cx="432.400" cy="553.600" r="2.200" fill="none" stroke="#4a90e0" stroke-width="1.200"/><circle cx="438.600" cy="553.200" r="2.200" fill="none" stroke="#4a90e0" stroke-width="1.200"/><path d="M433.400 551.600l4-7M437.400 551.400l-5-6.400" stroke="#c8c8c8" stroke-width="1"/>
<!-- fusion -->
<rect x="459.600" y="541.800" width="15" height="15" rx="2" fill="#f06a1e"/><rect x="459.600" y="552.400" width="15" height="4.400" rx="1.400" fill="#b84410"/><path d="M465.200 544.200h4.600v1.500h-2.900v1.500h2.400v1.500h-2.400v2.500h-1.700z" fill="#fff"/><rect x="464.800" y="553.800" width="4.600" height="1.200" fill="#f2c8a0"/>
<!-- obs-like -->
<circle cx="498" cy="549" r="6.700" fill="#1c1c1c" stroke="#d8d8d8" stroke-width="1.100"/><path d="M498 549l-4-4.600M498 549l5.400-1.800M498 549l-1.600 5.600" stroke="#bdbdbd" stroke-width=".9"/><circle cx="503.400" cy="553.600" r="3.400" fill="#f0141e"/>
</svg>
<span class="t" style="left:57.600px;top:545.400px;font-size:9.300px;color:#f4f4f4">Wyszukaj</span>

<!--WEBCAM-->
<svg class="abs" style="left:813px;top:457px" width="187" height="105" viewBox="813 457 187 105">
<defs><filter id="wb" x="-5%" y="-5%" width="110%" height="110%"><feGaussianBlur stdDeviation="1"/></filter><linearGradient id="wl" x1="0" y1="0" x2="1" y2="0"><stop offset="0" stop-color="#bab6ab"/><stop offset=".35" stop-color="#c3bfb4"/><stop offset="1" stop-color="#b2aea3"/></linearGradient><linearGradient id="wr" x1="0" y1="0" x2="1" y2="1"><stop offset="0" stop-color="#c6c6bf"/><stop offset=".5" stop-color="#d3d4ce"/><stop offset="1" stop-color="#cdcec8"/></linearGradient><clipPath id="wc"><rect x="813" y="457" width="187" height="105"/></clipPath></defs>
<g clip-path="url(#wc)">
<rect x="813" y="457" width="187" height="105" fill="url(#wr)"/>
<g filter="url(#wb)">
<polygon points="810.0,455.0 854.7,455.0 842.4,565.4 810.0,565.4" fill="url(#wl)"/>
<polygon points="873.8,455.0 893.0,455.0 893.0,519.7 882.3,519.7 883.3,473.1" fill="#b5b1a5"/>
<polygon points="893.0,455.0 909.0,455.0 909.0,466.4 893.0,475.9" fill="#c4c3bc" opacity=".7"/>
<polygon points="855.7,455.0 875.7,455.0 883.3,473.1 883.3,517.8 872.8,544.5 865.2,565.4 840.5,565.4" fill="#dfe6e3"/>
<polygon points="867.1,512.1 883.3,512.1 883.3,538.8 865.2,548.3" fill="#c5cac5" opacity=".7"/>
<polygon points="852.8,456.0 858.0,456.0 850.9,563.5 841.4,563.5" fill="#eef6f4"/>
<polygon points="858.7,463.6 868.3,473.1 864.4,546.8 851.9,555.5" fill="#4f858d"/>
<polygon points="858.0,466.4 860.6,468.3 854.2,554.0 851.5,555.5" fill="#7fa9ad" opacity=".7"/>
<polygon points="991.6,510.2 1004.0,506.4 1004.0,565.4 994.5,565.4" fill="#e6e6e4"/>
<polygon points="994.5,510.2 1004.0,507.4 1004.0,521.6 996.0,520.7" fill="#4c4c4a"/>
</g>
<g filter="url(#wb)">
<polygon points="877.0,519.7 883.3,514.0 895.7,514.0 895.7,542.6 877.6,540.7" fill="#1b1b1d"/>
<polygon points="927.8,527.3 943.1,529.2 958.3,540.7 967.8,550.2 981.1,565.4 924.0,565.4" fill="#1c1c1f"/>
<polygon points="849.0,565.4 865.2,546.8 876.6,541.0 891.9,537.2 905.0,544.5 928.0,538.8 939.4,536.9 954.7,544.5 981.3,565.4" fill="#20242e"/>
<polygon points="849.0,565.4 865.2,546.8 876.6,541.0 891.9,537.2 905.2,548.3 916.6,565.4" fill="#2a3142"/>
<polygon points="901.2,536.9 925.9,535.0 926.9,544.5 918.3,554.0 901.2,554.9 899.3,550.2" fill="#9a6c60"/>
<ellipse cx="912.2" cy="518.8" rx="18.7" ry="28.6" fill="#c38d7f"/>
<ellipse cx="910.7" cy="514.0" rx="15.6" ry="19.0" fill="#cd9889"/>
<path d="M 893.2 503.5 C 893.6 491.2 903.1 482.6 913.6 482.6 C 924.0 483.2 930.7 495.0 929.4 508.3 C 925.0 497.8 906.9 495.9 893.2 503.5 z" fill="#412d28"/>
<polygon points="895.5,514.4 906.0,513.6 906.0,516.3 895.5,517.1" fill="#8a6058" opacity=".65"/>
<polygon points="913.6,513.1 924.0,512.5 924.0,515.2 913.6,515.9" fill="#8a6058" opacity=".65"/>
<ellipse cx="910.3" cy="537.2" rx="6.9" ry="2.5" fill="#a65a5c"/>
<ellipse cx="909.2" cy="524.5" rx="3.0" ry="5.3" fill="#b88072"/>
<path d="M 886.9 512.1 C 887.9 491.2 899.3 481.7 912.6 481.3 C 925.9 481.7 935.5 495.0 936.4 510.2" fill="none" stroke="#232323" stroke-width="3.3"/>
<ellipse cx="887.5" cy="524.5" rx="7.2" ry="12.6" fill="#1d1d1f"/>
<ellipse cx="935.1" cy="518.8" rx="6.5" ry="12.9" fill="#1d1d1f"/>
<path d="M 886.0 529.2 L 896.4 535.0" fill="none" stroke="#1a1a1a" stroke-width="1.5"/>
</g>
<rect x="963.6" y="525.8" width="28.6" height="28.6" fill="#2e6eb8" opacity=".94"/>
<text x="977.9" y="536.9" font-family="Liberation Sans, sans-serif" font-size="6.4" fill="#f4f7fa" text-anchor="middle">SUBUJ</text>
<text x="977.9" y="548.7" font-family="Liberation Sans, sans-serif" font-size="9.8" font-weight="bold" fill="#ffffff" text-anchor="middle" letter-spacing="-.3">MAT</text>
</g></svg>
<div class="abs" style="left:978px;top:0;width:22px;height:457px;background:linear-gradient(to right,rgba(90,90,90,0) 0%,rgba(90,90,90,.04) 35%,rgba(90,90,90,.12) 70%,rgba(90,90,90,.27) 100%);pointer-events:none"></div>
<!--WEBCAM_END-->
</div>
</body>
</html>
